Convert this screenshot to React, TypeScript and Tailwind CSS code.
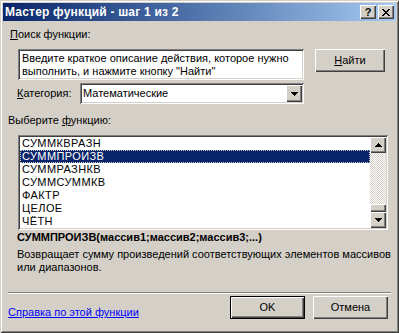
import React from 'react';

const raised = 'shadow-[inset_1px_1px_#fff,inset_-1px_-1px_#404040,inset_-2px_-2px_#808080]';
const sunken = 'shadow-[inset_1px_1px_#808080,inset_-1px_-1px_#fff,inset_2px_2px_#404040,inset_-2px_-2px_#d4d0c8]';

const functions = ['СУММКВРАЗН', 'СУММПРОИЗВ', 'СУММРАЗНКВ', 'СУММСУММКВ', 'ФАКТР', 'ЦЕЛОЕ', 'ЧЁТН'];

// small pixel triangle used on combo and scroll buttons
const Arrow = ({ up }: { up?: boolean }) => {
  const rows = up ? [1, 3, 5, 7] : [7, 5, 3, 1];
  return (
    <svg width="7" height="4" viewBox="0 0 7 4" shapeRendering="crispEdges">
      {rows.map((w, i) => (
        <rect key={i} x={(7 - w) / 2} y={i} width={w} height={1} fill="#000" />
      ))}
    </svg>
  );
};

const CaptionButton = ({ children }: { children: React.ReactNode }) => (
  <div className={`w-[16px] h-[14px] bg-[#d4d0c8] flex items-center justify-center ${raised}`}>{children}</div>
);

const PushButton = ({ label, def }: { label: React.ReactNode; def?: boolean }) => (
  <div className={`w-[75px] h-[23px] bg-[#d4d0c8] flex items-center justify-center ${def ? 'border border-black' : ''}`}>
    <div className={`w-full h-full flex items-center justify-center ${raised}`}>{label}</div>
  </div>
);

export default function App() {
  return (
    <div className="w-[399px] h-[333px] bg-[#d4d0c8] p-[3px] flex flex-col overflow-hidden font-['Liberation_Sans',Arial,sans-serif] text-[11px] leading-[13px] text-black shadow-[inset_1px_1px_#d4d0c8,inset_-1px_-1px_#404040,inset_2px_2px_#fff,inset_-2px_-2px_#808080]">
      {/* title bar */}
      <div className="h-[18px] shrink-0 flex items-center justify-between pl-[2px] pr-[2px] bg-gradient-to-r from-[#0a246a] to-[#a6caf0]">
        <span className="text-white font-bold text-[12px] tracking-[0.2px] leading-none">Мастер функций - шаг 1 из 2</span>
        <div className="flex gap-[2px]">
          <CaptionButton>
            <span className="font-bold text-[11px] leading-none">?</span>
          </CaptionButton>
          <CaptionButton>
            <svg width="8" height="7" viewBox="0 0 8 7" shapeRendering="crispEdges">
              <path d="M0 0h2v1H0zM6 0h2v1H6zM1 1h2v1H1zM5 1h2v1H5zM2 2h4v1H2zM3 3h2v1H3zM2 4h4v1H2zM1 5h2v1H1zM5 5h2v1H5zM0 6h2v1H0zM6 6h2v1H6z" fill="#000" />
            </svg>
          </CaptionButton>
        </div>
      </div>

      <div className="flex-1 flex flex-col">
        <div className="ml-[7px] mt-[7px]">
          <u>П</u>оиск функции:
        </div>

        <div className="flex items-start mt-[8px] ml-[15px]">
          <div className={`w-[286px] h-[31px] bg-white pl-[4px] pt-[3px] ${sunken}`}>
            Введите краткое описание действия, которое нужно
            <br />
            выполнить, и нажмите кнопку "Найти"
          </div>
          <div className="ml-[11px] w-[70px]">
            <div className={`w-[70px] h-[23px] flex items-center justify-center ${raised}`}>
              <span>
                <u>Н</u>айти
              </span>
            </div>
          </div>
        </div>

        <div className="flex items-center mt-[3px] ml-[14px]">
          <span className="w-[63px]">
            <u>К</u>атегория:
          </span>
          <div className={`w-[224px] h-[21px] bg-white flex items-center justify-between p-[2px] ${sunken}`}>
            <span className="pl-[1px]">Математические</span>
            <div className={`w-[16px] h-[17px] bg-[#d4d0c8] flex items-center justify-center ${raised}`}>
              <Arrow />
            </div>
          </div>
        </div>

        <div className="ml-[5px] mt-[10px]">
          Выберите <u>ф</u>ункцию:
        </div>

        <div className={`ml-[15px] mt-[8px] w-[370px] h-[95px] bg-white p-[2px] flex ${sunken}`}>
          <div className="flex-1 flex flex-col">
            {functions.map((f, i) => (
              <div
                key={f}
                className={`h-[13px] pl-[2px] tracking-[0.4px] ${i === 1 ? 'bg-[#0a246a] text-white outline outline-1 outline-dotted outline-[#d4d0c8] -outline-offset-1' : ''}`}
              >
                {f}
              </div>
            ))}
          </div>
          <div className="w-[16px] flex flex-col bg-[repeating-conic-gradient(#d4d0c8_0_25%,#fff_0_50%)] bg-[length:2px_2px]">
            <div className={`h-[16px] bg-[#d4d0c8] flex items-center justify-center ${raised}`}>
              <Arrow up />
            </div>
            <div className="flex-1" />
            <div className={`h-[8px] bg-[#d4d0c8] ${raised}`} />
            <div className={`h-[16px] bg-[#d4d0c8] flex items-center justify-center ${raised}`}>
              <Arrow />
            </div>
          </div>
        </div>

        <div className="ml-[14px] mt-[1px] font-bold">СУММПРОИЗВ(массив1;массив2;массив3;...)</div>
        <div className="ml-[14px] mt-[4px]">
          Возвращает сумму произведений соответствующих элементов массивов
          <br />
          или диапазонов.
        </div>

        <div className="mx-[5px] mt-[18px] border-t border-t-[#808080] border-b border-b-white" />

        <div className="flex items-start mt-[2px]">
          <a className="ml-[5px] mt-[10px] text-[#0000ff] underline">Справка по этой функции</a>
          <div className="ml-auto mr-[8px] flex gap-[8px]">
            <PushButton label="OK" def />
            <PushButton label="Отмена" />
          </div>
        </div>
      </div>
    </div>
  );
}
